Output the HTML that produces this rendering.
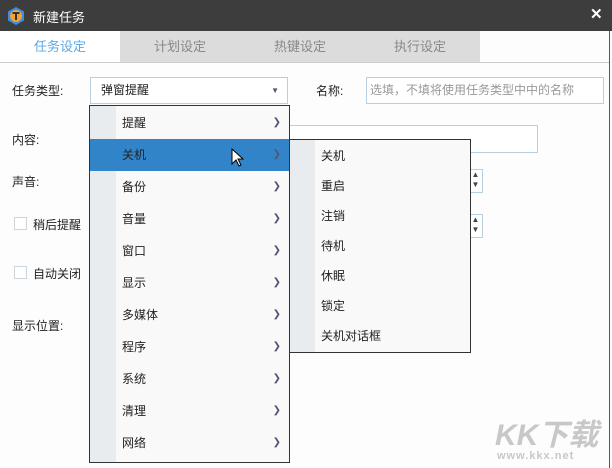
<!DOCTYPE html>
<html><head><meta charset="utf-8"><style>
*{margin:0;padding:0;box-sizing:border-box}
body{width:612px;height:468px;overflow:hidden;background:#fdfdfd;font-family:"Liberation Sans","Noto Sans CJK SC",sans-serif;font-size:12px;color:#222;position:relative}
.a{position:absolute}
.title{left:0;top:0;width:612px;height:31px;background:#3d3d3d;color:#fff}
.tab{top:31px;height:31px;line-height:31px;text-align:center;font-size:13px;color:#888}
.menu{background:#f9f9f9;border:1px solid #333}
.it{position:absolute;left:0;right:0;height:32px;line-height:32px;padding-left:32px;font-size:12px}
.arr{position:absolute;right:8px;top:0;color:#557;font-size:10px}
.cb{width:13px;height:13px;border:1px solid #ccd5dd;background:#fff}
</style></head><body>
<div class="a title">
 <svg class="a" style="left:6px;top:6px" width="20" height="20" viewBox="0 0 20 20"><polygon points="10,1 18,5.5 18,14.5 10,19 2,14.5 2,5.5" fill="#3a8ee0"/><circle cx="10" cy="10" r="6" fill="#f3a23a"/><path d="M6.5 7h7M10 7v7" stroke="#333" stroke-width="2"/></svg>
 <div class="a" style="left:33px;top:7px;font-size:13px">新建任务</div>
 <div class="a" style="left:590px;top:5px;font-size:15px;font-weight:bold">✕</div>
</div>
<div class="a" style="left:609px;top:31px;width:1px;height:437px;background:#555"></div>
<div class="a tab" style="left:0;width:120px;background:#fff;color:#5aa9e6">任务设定</div>
<div class="a tab" style="left:120px;width:360px;background:#dcdcdc"></div>
<div class="a tab" style="left:120px;width:120px">计划设定</div>
<div class="a tab" style="left:240px;width:120px">热键设定</div>
<div class="a tab" style="left:360px;width:120px">执行设定</div>
<div class="a" style="left:0;top:62px;width:609px;height:1px;background:#ccc"></div>

<div class="a" style="left:12px;top:82px;font-size:12px">任务类型:</div>
<div class="a" style="left:90px;top:77px;width:198px;height:27px;border:1px solid #b8cfe0;background:#fff;padding-left:10px;line-height:25px">弹窗提醒<span class="a" style="right:8px;top:0;font-size:8px;color:#557">▼</span></div>
<div class="a" style="left:316px;top:82px">名称:</div>
<div class="a" style="left:366px;top:77px;width:238px;height:27px;border:1px solid #b8cfe0;background:#fff;padding-left:3px;line-height:25px;color:#999">选填，不填将使用任务类型中中的名称</div>
<div class="a" style="left:12px;top:131px">内容:</div>
<div class="a" style="left:280px;top:125px;width:258px;height:28px;border:1px solid #b8cfe0;background:#fff"></div>
<div class="a" style="left:12px;top:173px">声音:</div>
<div class="a" style="left:468px;top:169px;width:15px;height:24px;border:1px solid #b8cfe0;background:#fff;font-size:8px;line-height:10px;text-align:center;color:#444">▲<br>▼</div>
<div class="a" style="left:468px;top:214px;width:15px;height:24px;border:1px solid #b8cfe0;background:#fff;font-size:8px;line-height:10px;text-align:center;color:#444">▲<br>▼</div>
<div class="a cb" style="left:14px;top:217px"></div><div class="a" style="left:33px;top:216px">稍后提醒</div>
<div class="a cb" style="left:14px;top:266px"></div><div class="a" style="left:33px;top:265px">自动关闭</div>
<div class="a" style="left:12px;top:317px">显示位置:</div>

<div class="a menu" style="left:89px;top:105px;width:201px;height:358px">
 <div class="a" style="left:0;top:0;width:26px;height:356px;background:#e8ecef"></div>
 <div class="it" style="top:1px">提醒<span class="arr">❯</span></div>
 <div class="it" style="top:33px;background:#3284c8">关机<span class="arr">❯</span></div>
 <div class="it" style="top:65px">备份<span class="arr">❯</span></div>
 <div class="it" style="top:97px">音量<span class="arr">❯</span></div>
 <div class="it" style="top:129px">窗口<span class="arr">❯</span></div>
 <div class="it" style="top:161px">显示<span class="arr">❯</span></div>
 <div class="it" style="top:193px">多媒体<span class="arr">❯</span></div>
 <div class="it" style="top:225px">程序<span class="arr">❯</span></div>
 <div class="it" style="top:257px">系统<span class="arr">❯</span></div>
 <div class="it" style="top:289px">清理<span class="arr">❯</span></div>
 <div class="it" style="top:321px">网络<span class="arr">❯</span></div>
 <svg class="a" style="left:141px;top:42px" width="14" height="20" viewBox="0 0 14 20"><path d="M1 1v15l4-4 3 6 2-1-3-6h5z" fill="#fff" stroke="#000"/></svg>
</div>
<div class="a menu" style="left:289px;top:139px;width:182px;height:214px">
 <div class="a" style="left:0;top:0;width:25px;height:212px;background:#e8ecef"></div>
 <div class="it" style="top:1px;height:30px;line-height:30px;padding-left:31px">关机</div>
 <div class="it" style="top:31px;height:30px;line-height:30px;padding-left:31px">重启</div>
 <div class="it" style="top:61px;height:30px;line-height:30px;padding-left:31px">注销</div>
 <div class="it" style="top:91px;height:30px;line-height:30px;padding-left:31px">待机</div>
 <div class="it" style="top:121px;height:30px;line-height:30px;padding-left:31px">休眠</div>
 <div class="it" style="top:151px;height:30px;line-height:30px;padding-left:31px">锁定</div>
 <div class="it" style="top:181px;height:30px;line-height:30px;padding-left:31px">关机对话框</div>
</div>
<div class="a" style="left:495px;top:410px;font-size:30px;font-weight:bold;color:#c8c8c8;font-style:italic">KK下载</div>
<div class="a" style="left:497px;top:450px;font-size:11px;font-weight:bold;color:#c8c8c8;letter-spacing:1px">www.kkx.net</div>
</body></html>
